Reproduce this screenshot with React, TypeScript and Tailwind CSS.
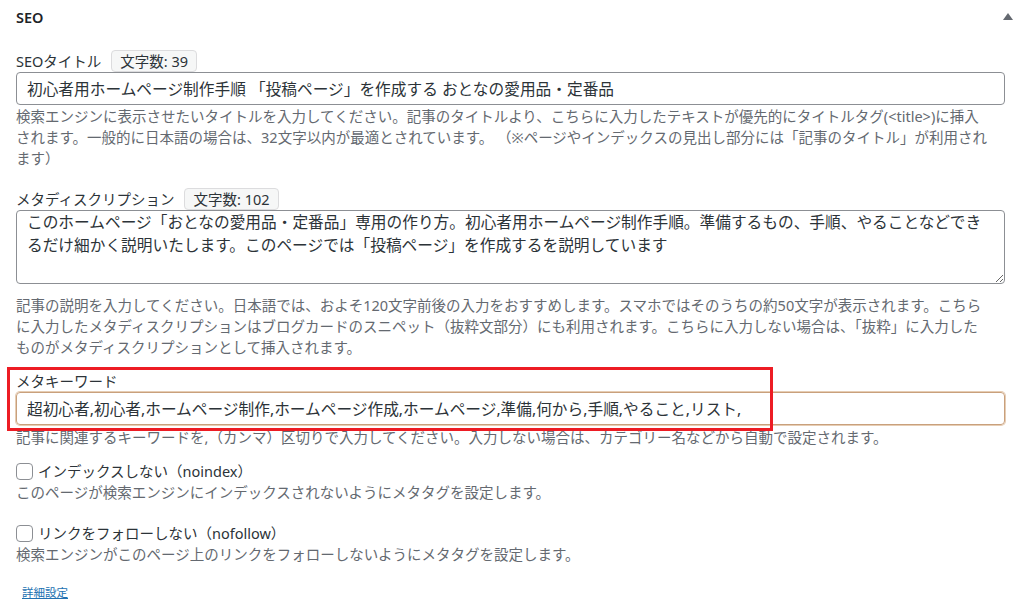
import React from "react";

const font = { fontFamily: '"Noto Sans", "Noto Sans CJK JP", sans-serif' };

const CountBadge = ({ count }: { count: number }) => (
  <span className="ml-[10px] inline-flex h-[22px] items-center rounded-[4px] border border-[#dcdcde] bg-[#f6f7f7] px-[8px] text-[14.5px] leading-none text-[#2c3338]">
    文字数: {count}
  </span>
);

const Help = ({ children }: { children: React.ReactNode }) => (
  <p className="text-[14.5px] leading-[21px] text-[#646970]">{children}</p>
);

const CheckRow = ({ id, label, help }: { id: string; label: string; help: string }) => (
  <div>
    <div className="flex h-[21px] items-center">
      <input
        id={id}
        type="checkbox"
        className="h-[17px] w-[17px] appearance-none rounded-[4px] border border-[#8c8f94] bg-white"
      />
      <label htmlFor={id} className="ml-[5px] text-[14.5px] leading-[21px] text-[#2c3338]">
        {label}
      </label>
    </div>
    <Help>{help}</Help>
  </div>
);

export default function App() {
  return (
    <div className="h-[615px] w-[1024px] overflow-hidden bg-white pl-4 pr-[19px]" style={font}>
      <div className="flex h-[36px] items-center justify-between">
        <h2 className="text-[14.5px] font-semibold text-[#1d2327]">SEO</h2>
        <svg width="10" height="7" viewBox="0 0 10 7" className="mr-[-8px] mb-[3px]">
          <path d="M5 0 L10 7 L0 7 Z" fill="#646970" />
        </svg>
      </div>

      {/* SEO title */}
      <div className="mt-[14px]">
        <div className="flex h-[22px] items-center">
          <label className="text-[14.5px] leading-[21px] text-[#2c3338]">SEOタイトル</label>
          <CountBadge count={39} />
        </div>
        <input
          type="text"
          defaultValue="初心者用ホームページ制作手順 「投稿ページ」を作成する おとなの愛用品・定番品"
          className="block h-[33px] w-full rounded-[4px] border border-[#8c8f94] px-[10px] text-[15.7px] text-[#2c3338] outline-none"
        />
        <div className="mt-[1px]">
          <Help>
            検索エンジンに表示させたいタイトルを入力してください。記事のタイトルより、こちらに入力したテキストが優先的にタイトルタグ(&lt;title&gt;)に挿入
            <br />
            されます。一般的に日本語の場合は、32文字以内が最適とされています。 （※ページやインデックスの見出し部分には「記事のタイトル」が利用され
            <br />
            ます）
          </Help>
        </div>
      </div>

      {/* Meta description */}
      <div className="mt-[19px]">
        <div className="flex h-[22px] items-center">
          <label className="text-[14.5px] leading-[21px] text-[#2c3338]">メタディスクリプション</label>
          <CountBadge count={102} />
        </div>
        <textarea
          defaultValue={
            "このホームページ「おとなの愛用品・定番品」専用の作り方。初心者用ホームページ制作手順。準備するもの、手順、やることなどでき\nるだけ細かく説明いたします。このページでは「投稿ページ」を作成するを説明しています"
          }
          className="block h-[74px] w-full rounded-[4px] border border-[#8c8f94] px-[10px] py-0 text-[15.7px] leading-[23px] text-[#2c3338] outline-none"
        />
        <div className="mt-[11px]">
          <Help>
            記事の説明を入力してください。日本語では、およそ120文字前後の入力をおすすめします。スマホではそのうちの約50文字が表示されます。こちら
            <br />
            に入力したメタディスクリプションはブログカードのスニペット（抜粋文部分）にも利用されます。こちらに入力しない場合は、「抜粋」に入力した
            <br />
            ものがメタディスクリプションとして挿入されます。
          </Help>
        </div>
      </div>

      {/* Meta keywords */}
      <div className="relative mt-[13px]">
        <label className="block h-[21px] text-[14.5px] leading-[21px] text-[#2c3338]">メタキーワード</label>
        <input
          type="text"
          defaultValue="超初心者,初心者,ホームページ制作,ホームページ作成,ホームページ,準備,何から,手順,やること,リスト,"
          className="block h-[33px] w-full rounded-[4px] border border-[#c9a07c] px-[10px] text-[15.7px] text-[#2c3338] shadow-[0_0_0_1px_#e6cdb4] outline-none"
        />
        <div className="mt-[2px]">
          <Help>記事に関連するキーワードを,（カンマ）区切りで入力してください。入力しない場合は、カテゴリー名などから自動で設定されます。</Help>
        </div>
        <div className="pointer-events-none absolute left-[-9px] top-[-4px] h-[64px] w-[766px] border-[3px] border-[#ed1c24]" />
      </div>

      <div className="mt-[13px]">
        <CheckRow
          id="noindex"
          label="インデックスしない（noindex）"
          help="このページが検索エンジンにインデックスされないようにメタタグを設定します。"
        />
      </div>
      <div className="mt-[20px]">
        <CheckRow
          id="nofollow"
          label="リンクをフォローしない（nofollow）"
          help="検索エンジンがこのページ上のリンクをフォローしないようにメタタグを設定します。"
        />
      </div>

      <div className="mt-[14px] pl-[6px]">
        <a href="#" className="text-[11.5px] leading-[16px] text-[#2271b1] underline">
          詳細設定
        </a>
      </div>
    </div>
  );
}
